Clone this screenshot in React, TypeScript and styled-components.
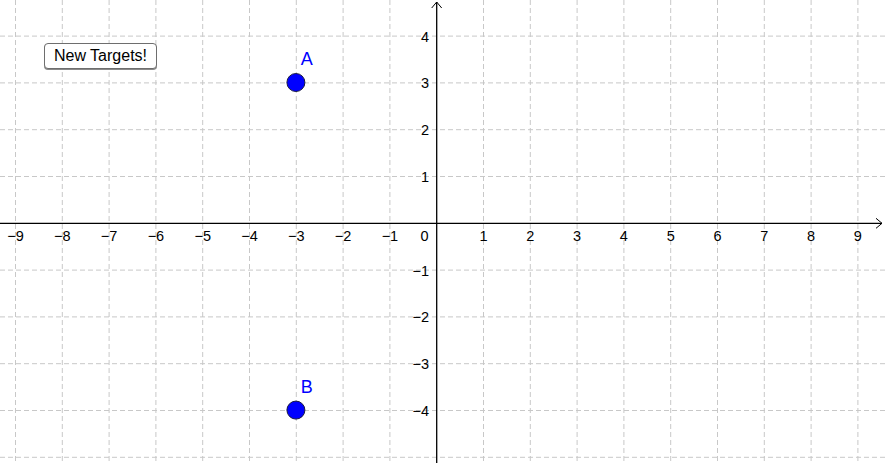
import React from 'react';
import styled, { createGlobalStyle } from 'styled-components';

const GlobalStyle = createGlobalStyle`
    html, body {
        margin: 0;
        padding: 0;
        background: #ffffff;
    }
`;

const W = 886;
const H = 463;
const OX = 436.7;
const OY = 223.3;
const UNIT = 46.8;

const Board = styled.div`
    position: relative;
    width: ${W}px;
    height: ${H}px;
    overflow: hidden;
    background: #ffffff;
    font-family: 'Liberation Sans', Arial, sans-serif;
`;

const Canvas = styled.svg`
    display: block;
`;

const GridLine = styled.line`
    stroke: #c8c8c8;
    stroke-width: 1;
    stroke-dasharray: 5 3;
`;

const AxisLine = styled.line`
    stroke: #000000;
    stroke-width: 1.3;
`;

const Arrow = styled.polyline`
    fill: none;
    stroke: #000000;
    stroke-width: 1;
`;

const TickLabel = styled.text`
    font-family: 'Liberation Sans', Arial, sans-serif;
    font-size: 14.5px;
    fill: #000000;
`;

const PointDot = styled.circle`
    fill: #0000ff;
    stroke: #1a1a40;
    stroke-width: 1;
`;

const PointLabel = styled.text`
    font-family: 'Liberation Sans', Arial, sans-serif;
    font-size: 18px;
    fill: #0000ff;
`;

const TargetButton = styled.button`
    position: absolute;
    left: 44px;
    top: 43px;
    width: 113px;
    height: 26px;
    padding: 0;
    background: #ffffff;
    border: 1px solid #6e6e6e;
    border-radius: 4px;
    box-shadow: 0 1px 0 #8a8a8a;
    font-family: 'Liberation Sans', Arial, sans-serif;
    font-size: 16px;
    color: #000000;
    cursor: pointer;
`;

const px = (x: number) => OX + x * UNIT;
const py = (y: number) => OY - y * UNIT;

const xs = [-9, -8, -7, -6, -5, -4, -3, -2, -1, 1, 2, 3, 4, 5, 6, 7, 8, 9];
const ys = [4, 3, 2, 1, -1, -2, -3, -4];
const gridYs = [4, 3, 2, 1, -1, -2, -3, -4, -5];

const label = (n: number) => (n < 0 ? '\u2212' + Math.abs(n) : String(n));

const points = [
    { name: 'A', x: -3, y: 3 },
    { name: 'B', x: -3, y: -4 },
];

const App = () => {
    return (
        <>
            <GlobalStyle />
            <Board>
                <Canvas width={W} height={H} viewBox={`0 0 ${W} ${H}`}>
                    {xs.map((x) => (
                        <GridLine key={'gx' + x} x1={px(x)} y1={0} x2={px(x)} y2={H} />
                    ))}
                    {gridYs.map((y) => (
                        <GridLine key={'gy' + y} x1={0} y1={py(y)} x2={W} y2={py(y)} />
                    ))}

                    <AxisLine x1={0} y1={OY} x2={882} y2={OY} />
                    <Arrow points={`876,${OY - 5} 882,${OY} 876,${OY + 5}`} />
                    <AxisLine x1={OX} y1={H} x2={OX} y2={2} />
                    <Arrow points={`${OX - 5},8 ${OX},2 ${OX + 5},8`} />

                    {xs.map((x) => (
                        <TickLabel key={'lx' + x} x={px(x)} y={240.5} textAnchor="middle">
                            {label(x)}
                        </TickLabel>
                    ))}
                    <TickLabel x={428.5} y={240.5} textAnchor="end">
                        0
                    </TickLabel>
                    {ys.map((y) => (
                        <TickLabel key={'ly' + y} x={429} y={py(y) + 5.5} textAnchor="end">
                            {label(y)}
                        </TickLabel>
                    ))}

                    {points.map((p) => (
                        <g key={p.name}>
                            <PointDot cx={px(p.x) - 0.4} cy={py(p.y) - 0.4} r={9} />
                            <PointLabel x={px(p.x) + 4.5} y={py(p.y) - 18}>
                                {p.name}
                            </PointLabel>
                        </g>
                    ))}
                </Canvas>
                <TargetButton>New Targets!</TargetButton>
            </Board>
        </>
    );
};

export default App;
